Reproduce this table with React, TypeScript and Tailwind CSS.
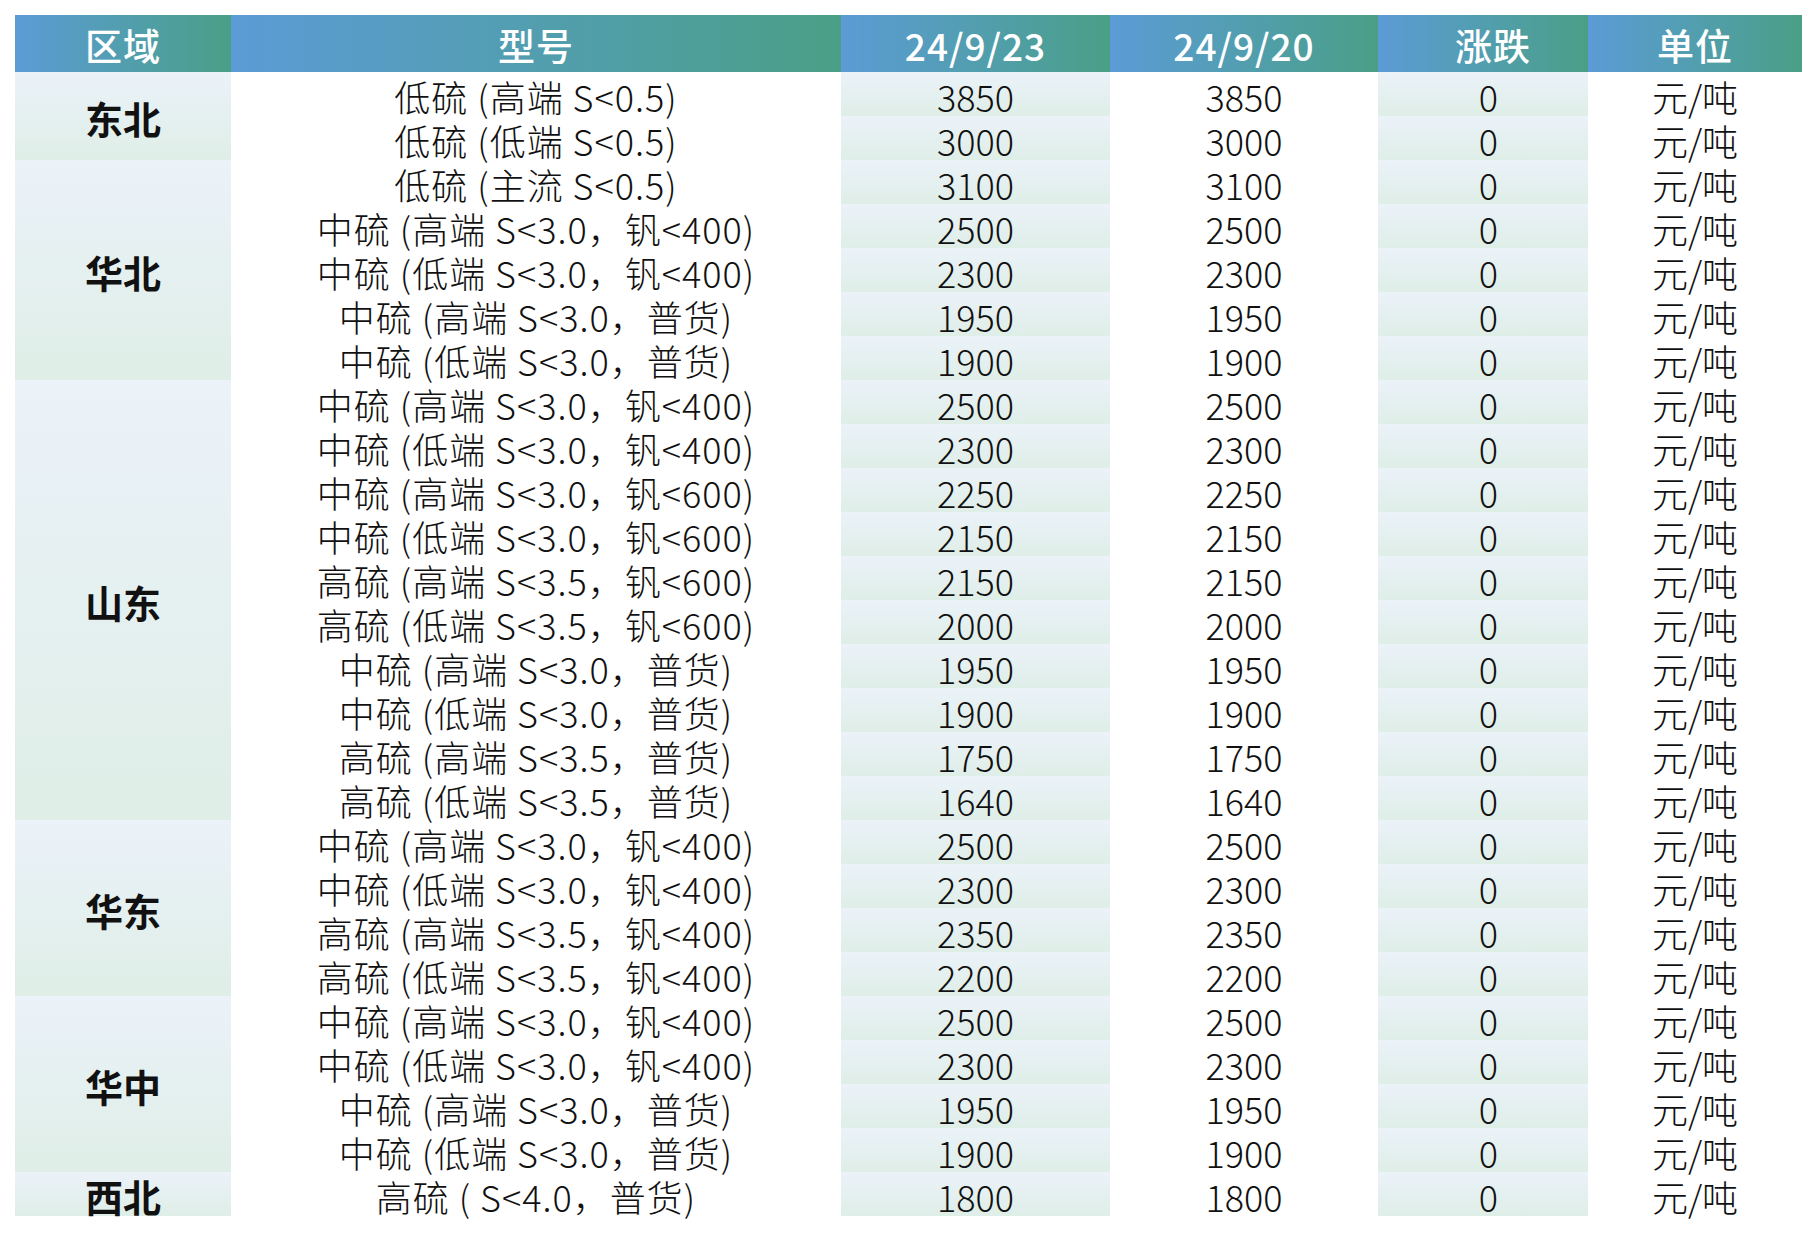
const rows: { region?: string; span?: string; model: string; a: string; b: string }[] = [
  { region: "东北", span: "row-span-2", model: "低硫 (高端 S<0.5)", a: "3850", b: "3850" },
  { model: "低硫 (低端 S<0.5)", a: "3000", b: "3000" },
  { region: "华北", span: "row-span-5", model: "低硫 (主流 S<0.5)", a: "3100", b: "3100" },
  { model: "中硫 (高端 S<3.0，钒<400)", a: "2500", b: "2500" },
  { model: "中硫 (低端 S<3.0，钒<400)", a: "2300", b: "2300" },
  { model: "中硫 (高端 S<3.0，普货)", a: "1950", b: "1950" },
  { model: "中硫 (低端 S<3.0，普货)", a: "1900", b: "1900" },
  { region: "山东", span: "row-span-10", model: "中硫 (高端 S<3.0，钒<400)", a: "2500", b: "2500" },
  { model: "中硫 (低端 S<3.0，钒<400)", a: "2300", b: "2300" },
  { model: "中硫 (高端 S<3.0，钒<600)", a: "2250", b: "2250" },
  { model: "中硫 (低端 S<3.0，钒<600)", a: "2150", b: "2150" },
  { model: "高硫 (高端 S<3.5，钒<600)", a: "2150", b: "2150" },
  { model: "高硫 (低端 S<3.5，钒<600)", a: "2000", b: "2000" },
  { model: "中硫 (高端 S<3.0，普货)", a: "1950", b: "1950" },
  { model: "中硫 (低端 S<3.0，普货)", a: "1900", b: "1900" },
  { model: "高硫 (高端 S<3.5，普货)", a: "1750", b: "1750" },
  { model: "高硫 (低端 S<3.5，普货)", a: "1640", b: "1640" },
  { region: "华东", span: "row-span-4", model: "中硫 (高端 S<3.0，钒<400)", a: "2500", b: "2500" },
  { model: "中硫 (低端 S<3.0，钒<400)", a: "2300", b: "2300" },
  { model: "高硫 (高端 S<3.5，钒<400)", a: "2350", b: "2350" },
  { model: "高硫 (低端 S<3.5，钒<400)", a: "2200", b: "2200" },
  { region: "华中", span: "row-span-4", model: "中硫 (高端 S<3.0，钒<400)", a: "2500", b: "2500" },
  { model: "中硫 (低端 S<3.0，钒<400)", a: "2300", b: "2300" },
  { model: "中硫 (高端 S<3.0，普货)", a: "1950", b: "1950" },
  { model: "中硫 (低端 S<3.0，普货)", a: "1900", b: "1900" },
  { region: "西北", span: "row-span-1", model: "高硫 ( S<4.0，普货)", a: "1800", b: "1800" },
];

const heads = [
  { t: "区域", c: "" },
  { t: "型号", c: "" },
  { t: "24/9/23", c: "" },
  { t: "24/9/20", c: "" },
  { t: "涨跌", c: "pl-[20px]" },
  { t: "单位", c: "" },
];

const tint = "bg-gradient-to-b from-[#ebf2f9] to-[#dfeee7]";
const cell = "flex items-center justify-center pt-[4px] text-[36px] font-light leading-none text-[#111] whitespace-pre";

export default function App() {
  return (
    <div className="min-h-screen bg-white pt-[15px] pl-[15px]" style={{ fontFamily: '"Noto Sans CJK SC", "Noto Sans", sans-serif' }}>
      <div className="grid grid-cols-[216px_610px_269px_268px_210px_214px] grid-rows-[57px] auto-rows-[44px] w-[1787px]">
        {heads.map((h) => (
          <div
            key={h.t}
            className={`${h.c} flex items-center justify-center pt-[4px] text-[37px] font-medium tracking-[1px] leading-none text-white bg-gradient-to-r from-[#5c9bd6] to-[#4a9f86]`}
          >
            {h.t}
          </div>
        ))}
        {rows.map((r, i) => [
          r.region ? (
            <div
              key={"r" + i}
              className={`${r.span} ${tint} flex items-center justify-center pt-[4px] text-[38px] font-bold leading-none text-[#111]`}
            >
              {r.region}
            </div>
          ) : null,
          <div key={"m" + i} className={`${cell} tracking-[1px]`}>{r.model}</div>,
          <div key={"a" + i} className={`${cell} ${tint}`}>{r.a}</div>,
          <div key={"b" + i} className={cell}>{r.b}</div>,
          <div key={"c" + i} className={`${cell} ${tint} pl-[11px]`}>0</div>,
          <div key={"u" + i} className={cell}>元/吨</div>,
        ])}
      </div>
    </div>
  );
}
